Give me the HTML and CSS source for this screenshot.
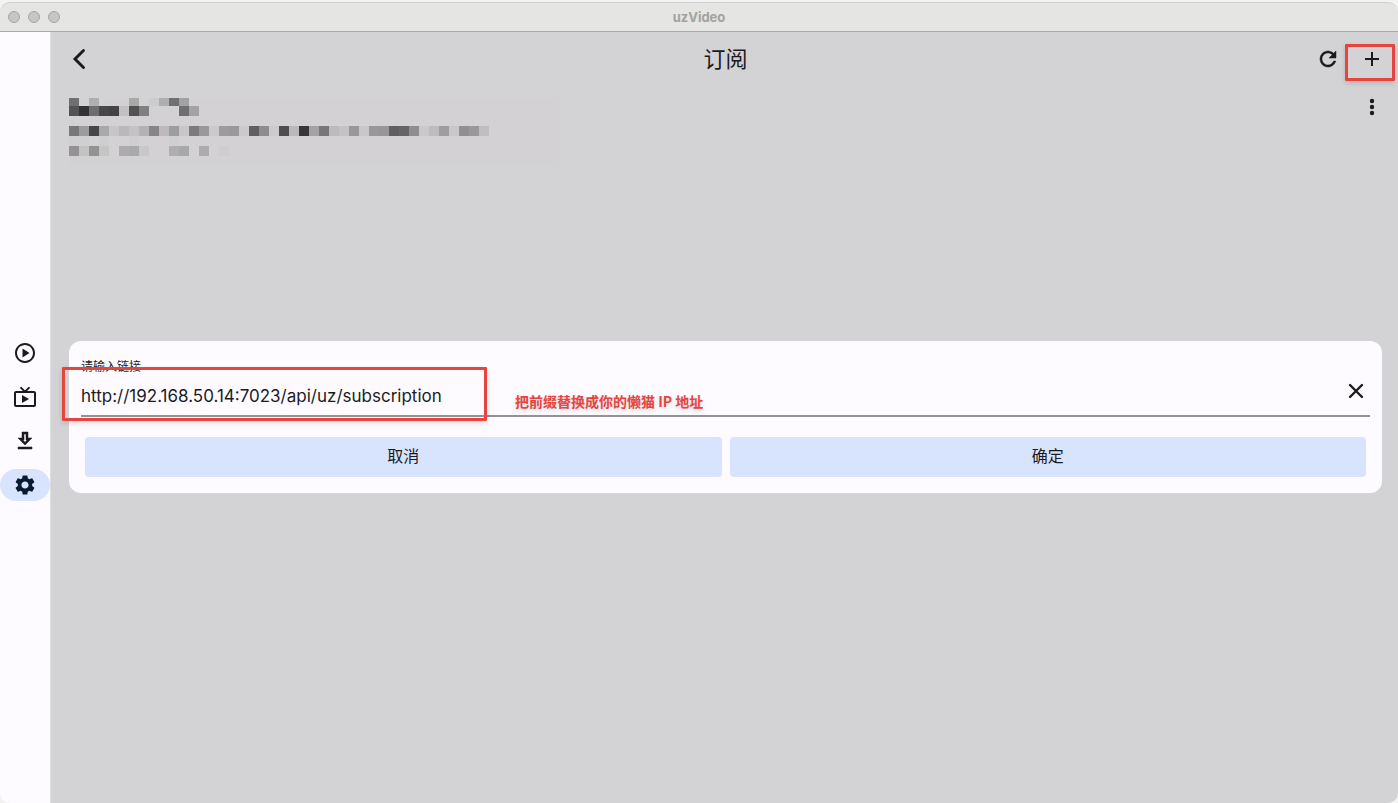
FILE: index.html
```html
<!DOCTYPE html>
<html lang="zh-CN">
  <head>
    <meta charset="UTF-8" />
    <meta name="viewport" content="width=device-width, initial-scale=1.0" />
    <title>uzVideo</title>
    <link rel="stylesheet" href="styles.css">
  </head>
  <body>
    <div class="window">
      <div class="titlebar">
        <div class="lights"><span></span><span></span><span></span></div>
        <div class="window-title">uzVideo</div>
      </div>
      <div class="content">
        <nav class="sidebar">
          <a href="#" aria-label="播放">
            <svg viewBox="0 0 24 24"><path d="M12 2C6.48 2 2 6.48 2 12s4.48 10 10 10 10-4.48 10-10S17.52 2 12 2zm0 18c-4.41 0-8-3.59-8-8s3.59-8 8-8 8 3.59 8 8-3.59 8-8 8zm-2.5-3.5l7-4.5-7-4.5z"/></svg>
          </a>
          <a href="#" aria-label="直播">
            <svg viewBox="0 0 24 24"><path d="M21 6h-7.590l3.290-3.290L16 2l-4 4-4-4-.7.710L10.590 6H3c-1.100 0-2 .89-2 2v12c0 1.100.9 2 2 2h18c1.100 0 2-.9 2-2V8c0-1.110-.9-2-2-2zm0 14H3V8h18v12zM9 10v8l7-4z"/><path d="M7.600 2.300 12 6.700l4.400-4.400" fill="none" stroke="currentColor" stroke-width="1.700"/></svg>
          </a>
          <a href="#" aria-label="下载">
            <svg viewBox="0 0 24 24" class="bold"><path d="M19 9h-4V3H9v6H5l7 7 7-7zm-8 2V5h2v6h1.170L12 13.170 9.830 11H11zm-6 7h14v2H5z"/></svg>
          </a>
          <a href="#" class="active" aria-label="设置">
            <svg viewBox="0 0 24 24"><path d="M19.140 12.940c.04-.3.060-.61.060-.94 0-.32-.02-.64-.07-.94l2.030-1.580c.18-.14.23-.41.12-.61l-1.920-3.320c-.12-.22-.37-.29-.59-.22l-2.390.96c-.5-.38-1.030-.7-1.620-.94l-.36-2.540c-.04-.24-.24-.41-.48-.41h-3.840c-.24 0-.43.17-.47.41l-.36 2.540c-.59.24-1.130.57-1.620.94l-2.390-.96c-.22-.08-.47 0-.59.22L2.740 8.870c-.12.21-.08.47.12.61l2.030 1.580c-.05.3-.09.63-.09.94s.02.64.07.94l-2.030 1.580c-.18.14-.23.41-.12.61l1.920 3.320c.12.22.37.29.59.22l2.390-.96c.5.38 1.030.7 1.620.94l.36 2.540c.05.24.24.41.48.41h3.840c.24 0 .44-.17.47-.41l.36-2.540c.59-.24 1.130-.56 1.620-.94l2.390.96c.22.08.47 0 .59-.22l1.920-3.320c.12-.22.07-.47-.12-.61l-2.010-1.580zM12 15.600c-1.980 0-3.600-1.620-3.600-3.600s1.620-3.600 3.600-3.600 3.600 1.620 3.600 3.600-1.620 3.600-3.600 3.600z"/></svg>
          </a>
        </nav>
        <main class="page">
          <header class="page-header">
            <button type="button" class="icon-btn" aria-label="返回">
              <svg viewBox="0 0 24 24"><path d="M16.500 3.500 8 12l8.500 8.500" fill="none" stroke="currentColor" stroke-width="2.900" stroke-linecap="round"/></svg>
            </button>
            <h1>订阅</h1>
            <div class="actions">
              <button type="button" class="icon-btn" aria-label="刷新">
                <svg viewBox="0 0 24 24" class="bold"><path d="M17.650 6.350C16.200 4.900 14.210 4 12 4c-4.420 0-7.990 3.580-7.990 8s3.570 8 7.990 8c3.730 0 6.840-2.550 7.730-6h-2.080c-.82 2.330-3.040 4-5.650 4-3.310 0-6-2.690-6-6s2.690-6 6-6c1.660 0 3.140.69 4.220 1.780L13 11h7V4l-2.350 2.350z"/></svg>
              </button>
              <button type="button" class="icon-btn marked" aria-label="添加">
                <svg viewBox="0 0 24 24"><path d="M19 13h-6v6h-2v-6H5v-2h6V5h2v6h6z"/></svg>
              </button>
            </div>
          </header>

          <div class="item">
            <svg class="mosaic" id="mosaic" width="490" height="68" shape-rendering="crispEdges" aria-hidden="true"></svg>
            <button type="button" class="icon-btn" aria-label="更多">
              <svg viewBox="0 0 24 24"><circle cx="12" cy="6" r="2.200"/><circle cx="12" cy="12" r="2.200"/><circle cx="12" cy="18" r="2.200"/></svg>
            </button>
          </div>

          <div class="overlay">
            <form class="dialog">
              <div class="field">
                <div class="field-text">
                  <label for="link">请输入链接</label>
                  <input type="text" id="link" value="http://192.168.50.14:7023/api/uz/subscription" />
                </div>
                <button type="button" class="clear" aria-label="清除">
                  <svg viewBox="0 0 24 24"><path d="M6 6l12 12M18 6 6 18" fill="none" stroke="currentColor" stroke-width="2.400" stroke-linecap="round"/></svg>
                </button>
              </div>
              <div class="buttons">
                <button type="button">取消</button>
                <button type="button">确定</button>
              </div>
              <div class="link-mark"></div>
              <p class="note">把前缀替换成你的懒猫 IP 地址</p>
            </form>
          </div>
        </main>
      </div>
    </div>
    <script>
      // masked subscription name and address, "-" is an empty cell
      const rows = [
        { y: 0, h: 8, cells: "6f6f70 - afafb0 - - - a9a9aa - cbcccd aeaeaf 707072 a2a2a3" },
        { y: 8, h: 10, cells: "535353 333333 6e6e70 484848 434344 c1c1c2 525252 808081 - - - 6f6f71 a3a3a4" },
        { y: 28, h: 10, cells: "78787a 9c9c9e 464649 a8a8aa c6c5c7 b9b9bb c4c2c5 b3b3b3 868687 bcbabd 9d9d9f c8c6c8 7b7b7d 99999b cacacb 9d9b9e 99999b cacaca 5f5f61 8d8d8f cbcbcc 4e4e50 b9b9ba 373737 a3a3a4 777779 bcbabc c3c3c4 98989a c8c8c9 99979a 969698 5f5f61 656567 8f8d90 c9c9ca bdbdbd 9e9ea0 c8c8c9 909092 99999b bfbfbf" },
        { y: 38, h: 10, cells: "cfcfd0 cfcfd0 - cececf - - cfcfd0 - - - cecfd0" },
        { y: 48, h: 10, cells: "949293 c4c3c4 929293 c5c5c6 - acacad a9a9aa c8c7c9 - - aeaeb0 a8a8a9 - acacad - cfcdd0" },
      ];
      const mosaic = document.getElementById("mosaic");

      rows.forEach((row) => {
        row.cells.split(" ").forEach((color, i) => {
          if (color === "-") return;
          const rect = document.createElementNS("http://www.w3.org/2000/svg", "rect");
          rect.setAttribute("x", i * 10);
          rect.setAttribute("y", row.y);
          rect.setAttribute("width", 10);
          rect.setAttribute("height", row.h);
          rect.setAttribute("fill", "#" + color);
          mosaic.appendChild(rect);
        });
      });
    </script>
  </body>
</html>
```
FILE: styles.css
```css
*,
*::after {
  box-sizing: border-box;
}

body {
  margin: 0;
  background-color: #f3f3f3;
  color: #1b1b1f;
  font-family: Inter, "Noto Sans CJK SC", sans-serif;
}

button {
  padding: 0;
  border: 0;
  background: none;
  color: inherit;
  font: inherit;
  cursor: pointer;
}

svg {
  display: block;
  fill: currentColor;
}

.bold {
  stroke: currentColor;
  stroke-width: 0.5;
}

.window {
  display: flex;
  flex-direction: column;
  height: 100vh;
  padding-top: 2px;
}

.titlebar {
  display: grid;
  grid-template-columns: 1fr auto 1fr;
  align-items: center;
  height: 30px;
  border-top: 1px solid #cfcfcf;
  border-bottom: 1px solid #a9a9a9;
  border-radius: 10px 10px 0 0;
  background-color: #e5e5e3;
}

.lights {
  display: flex;
  gap: 8px;
  padding-left: 8px;
}

.lights span {
  width: 12px;
  height: 12px;
  border: 1px solid #a8a8a7;
  border-radius: 50%;
  background-color: #c6c6c5;
}

.window-title {
  color: #a2a2a0;
  font-size: 13px;
  font-weight: bold;
}

.content {
  display: flex;
  flex: 1;
  border-radius: 0 0 10px 10px;
  overflow: hidden;
}

.sidebar {
  display: flex;
  flex-direction: column;
  justify-content: center;
  gap: 12px;
  width: 51px;
  padding-top: 3px;
  border-right: 1px solid #dedde0;
  background-color: #fdfbff;
}

.sidebar a {
  display: flex;
  align-items: center;
  justify-content: center;
  height: 32px;
  border-radius: 16px;
  color: #1b1b1f;
}

.sidebar svg,
.icon-btn svg,
.clear svg {
  width: 24px;
  height: 24px;
}

.sidebar .active {
  background-color: #d8e4fd;
  color: #0a1a30;
}

.page {
  position: relative;
  flex: 1;
  background-color: #d3d3d5;
}

.page-header {
  display: grid;
  grid-template-columns: 1fr auto 1fr;
  align-items: center;
  height: 54px;
  padding: 0 14px 0 16px;
}

.page-header h1 {
  margin: 0;
  font-size: 22px;
  font-weight: normal;
  line-height: 32px;
}

.icon-btn {
  position: relative;
  width: 24px;
  height: 24px;
}

.actions {
  display: flex;
  justify-content: flex-end;
  gap: 20px;
}

/* red frame round the add button */
.marked::after {
  content: "";
  position: absolute;
  top: -3px;
  left: -15px;
  width: 50px;
  height: 37px;
  border: 3px solid #e6443f;
  border-radius: 1px;
  box-shadow: 0 2px 5px rgba(0, 0, 0, 0.15);
}

.item {
  display: flex;
  justify-content: space-between;
  align-items: flex-start;
  padding: 9px 14px 0 18px;
}

.mosaic {
  margin-top: 3px;
  background-color: #d3d1d4;
}

.overlay {
  position: absolute;
  inset: 0;
  display: flex;
  align-items: center;
  padding: 0 16px 2px 18px;
  pointer-events: none;
}

.dialog {
  position: relative;
  flex: 1;
  padding: 16px 12px;
  border-radius: 12px;
  background-color: #fdfbff;
  pointer-events: auto;
}

.field {
  display: flex;
  align-items: flex-end;
  border-bottom: 2px solid #929295;
}

.field-text {
  flex: 1;
}

.field label {
  display: block;
  font-size: 12px;
  line-height: 20px;
}

.field input {
  display: block;
  width: 100%;
  height: 38px;
  padding: 0;
  border: 0;
  outline: 0;
  background: none;
  color: inherit;
  font: inherit;
  font-size: 17px;
}

.clear {
  display: flex;
  align-items: center;
  justify-content: center;
  width: 28px;
  height: 48px;
}

.buttons {
  display: flex;
  gap: 8px;
  margin: 20px 4px 0;
}

.buttons button {
  flex: 1;
  height: 40px;
  padding-bottom: 4px;
  border-radius: 4px;
  background-color: #d8e4fd;
  font-size: 16px;
}

.link-mark {
  position: absolute;
  top: 26px;
  left: -7px;
  width: 425px;
  height: 54px;
  border: 3px solid #e6443f;
  border-radius: 1px;
  box-shadow: 0 2px 5px rgba(0, 0, 0, 0.15);
  pointer-events: none;
}

.note {
  position: absolute;
  top: 50px;
  left: 446px;
  margin: 0;
  color: #e6443f;
  font-family: "Noto Sans CJK SC", sans-serif;
  font-size: 14px;
  font-weight: bold;
  line-height: 20px;
  text-shadow: 0 2px 4px rgba(0, 0, 0, 0.15);
}
```
